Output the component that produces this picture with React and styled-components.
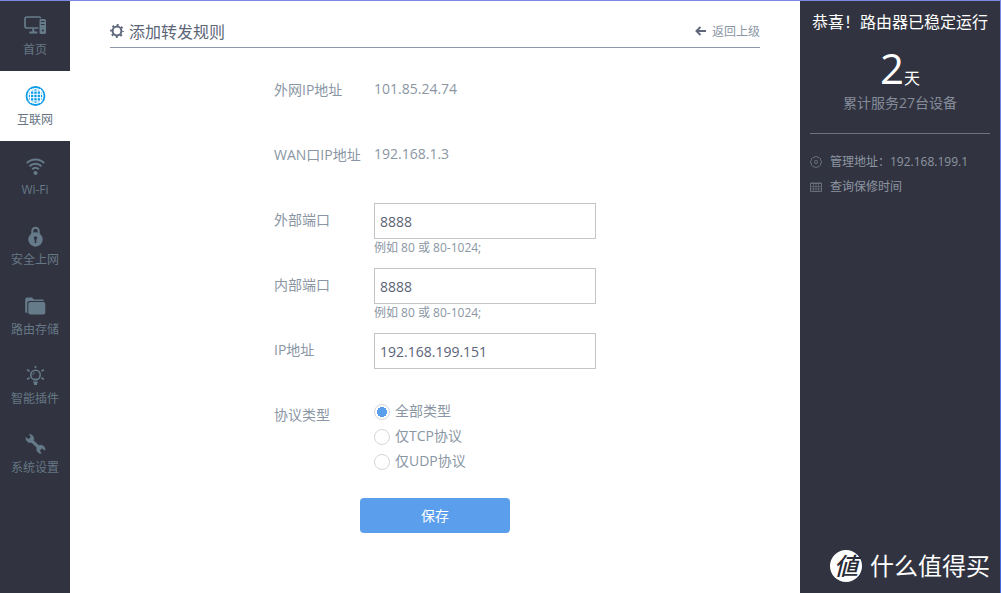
import React, { useState } from 'react'
import styled, { createGlobalStyle } from 'styled-components'

const GlobalStyle = createGlobalStyle`
  * {
    box-sizing: border-box;
  }
  body {
    margin: 0;
    font-family: "Open Sans", "Noto Sans CJK SC", sans-serif;
    font-size: 14px;
    color: #8a96a3;
    background: #fff;
  }
  a {
    color: inherit;
    text-decoration: none;
  }
  input, button {
    font-family: inherit;
  }
`

const Frame = styled.div`
  min-height: 100vh;
  padding: 1px 1px 0 0;
  display: flex;
  background: linear-gradient(#7b88e4, #4468dc);
`

const Sidebar = styled.nav`
  flex: 0 0 70px;
  display: flex;
  flex-direction: column;
  background: #313440;
`

const NavItem = styled.a`
  height: ${(p) => (p.$short ? 69 : 70)}px;
  padding-top: 13px;
  display: flex;
  flex-direction: column;
  align-items: center;
  font-size: 12px;
  line-height: 24px;
  && {
    color: ${(p) => (p.$active ? '#667482' : '#667785')};
  }
  background: ${(p) => (p.$active ? '#fff' : 'transparent')};
  svg {
    flex: none;
    color: ${(p) => (p.$active ? '#0d9bea' : '#667b89')};
  }
`

const Main = styled.main`
  flex: 1;
  min-width: 0;
  padding: 0 40px;
  background: #fff;
`

const Header = styled.header`
  height: 47px;
  padding-top: 14px;
  display: flex;
  justify-content: space-between;
  align-items: center;
  border-bottom: 1px solid #8f97aa;
`

const Title = styled.h1`
  margin: 0;
  display: flex;
  align-items: center;
  gap: 5px;
  font-size: 16px;
  font-weight: 400;
  color: #5c6678;
`

const BackLink = styled.a`
  display: flex;
  align-items: center;
  gap: 6px;
  font-size: 12px;
  svg {
    color: #5c6678;
  }
`

const Form = styled.form`
  max-width: 322px;
  margin: 25px auto;
`

const Row = styled.div`
  min-height: 65px;
  display: grid;
  grid-template-columns: 100px 1fr;
  align-items: start;
`

const Label = styled.label`
  line-height: 34px;
  white-space: nowrap;
`

const Value = styled.output`
  line-height: 32px;
`

const TextInput = styled.input`
  display: block;
  width: 100%;
  height: 36px;
  padding: 0 5px;
  border: 1px solid #c4c4c4;
  border-radius: 0;
  background: #fff;
  color: #5a6377;
  font-size: 14px;
  outline: none;
`

const Hint = styled.div`
  font-size: 12px;
  line-height: 18px;
`

const RadioList = styled.div`
  display: flex;
  flex-direction: column;
`

const RadioLabel = styled.label`
  height: 25px;
  display: flex;
  align-items: flex-start;
  gap: 5px;
  line-height: 25px;
`

const Radio = styled.input`
  appearance: none;
  width: 16px;
  height: 16px;
  margin: 6px 0 0;
  border: 1px solid #d4d6d9;
  border-radius: 50%;
  background: #fff;
  &:checked {
    background: radial-gradient(circle, #5a9eec 5px, #fff 5px);
  }
`

const SaveButton = styled.button`
  display: block;
  width: 150px;
  height: 35px;
  margin: 25px auto 0;
  padding: 0 0 2px;
  border: 0;
  border-radius: 4px;
  background: #5a9eec;
  color: #fff;
  font-size: 14px;
`

const Aside = styled.aside`
  flex: 0 0 200px;
  padding: 9px 10px 11px;
  display: flex;
  flex-direction: column;
  background: #313440;
`

const Status = styled.section`
  padding-bottom: 18px;
  border-bottom: 1px solid #6d717c;
  text-align: center;
`

const StatusTitle = styled.h2`
  margin: 0;
  font-size: 16px;
  font-weight: 400;
  line-height: 24px;
  color: #fff;
  white-space: nowrap;
`

const Days = styled.div`
  height: 57px;
  line-height: 68px;
  font-size: 16px;
  color: #fff;
  strong {
    font-size: 42px;
    font-weight: 400;
  }
`

const Served = styled.div`
  line-height: 24px;
  color: #858b9a;
`

const InfoList = styled.ul`
  margin: 15px 0 0;
  padding: 0;
  list-style: none;
  font-size: 12px;
  line-height: 25px;
  color: #8d95a0;
  li, a {
    display: flex;
    align-items: center;
    gap: 8px;
    white-space: nowrap;
  }
  svg {
    flex: none;
    color: #686d79;
  }
`

const Brand = styled.div`
  margin-top: auto;
  display: flex;
  align-items: center;
  justify-content: flex-end;
  gap: 8px;
  font-family: "Noto Sans CJK SC", sans-serif;
  font-size: 24px;
  line-height: 30px;
  color: #fff;
  white-space: nowrap;
`

const BrandBadge = styled.span`
  width: 32px;
  height: 32px;
  border-radius: 50%;
  background: #fff;
  color: #292c36;
  font-style: italic;
  font-weight: 500;
  text-align: center;
`

const BrandName = styled.span`
  height: 32px;
`

const NavIcon = ({ children }) => (
  <svg width="24" height="24" viewBox="0 0 24 24" fill="none" stroke="currentColor" aria-hidden="true">
    {children}
  </svg>
)

const HomeIcon = () => (
  <NavIcon>
    <path d="M15.5 14H4a2 2 0 0 1-2-2V5a2 2 0 0 1 2-2h12a2 2 0 0 1 1.8 1.2" strokeWidth="1.7" />
    <path d="M10.3 14.5v3M6.3 18.5h8" strokeWidth="2" />
    <rect x="16.5" y="5" width="6.5" height="15" rx="1.5" fill="currentColor" stroke="none" />
    <path d="M18 7.5h3.5M18 10.5h3.5" stroke="#313440" strokeWidth="1.2" />
    <circle cx="19.8" cy="16.5" r="1.1" fill="#313440" stroke="none" />
  </NavIcon>
)

const GlobeIcon = () => (
  <NavIcon>
    <circle cx="12.5" cy="12" r="9" strokeWidth="1.8" />
    <circle cx="12.5" cy="12" r="6.8" fill="currentColor" stroke="none" />
    <path d="M7.5 5v14M10.8 5v14M14.2 5v14M17.5 5v14" stroke="#fff" />
    <path d="M5.5 7h14M5.5 10.3h14M5.5 13.7h14M5.5 17h14" stroke="#fff" />
  </NavIcon>
)

const WifiIcon = () => (
  <NavIcon>
    <g strokeWidth="2">
      <path d="M3.8 9a12.5 12.5 0 0 1 17.4 0" />
      <path d="M6.6 12.2a8.5 8.5 0 0 1 11.8 0" />
      <path d="M9.2 15.2a5 5 0 0 1 6.6 0" />
    </g>
    <circle cx="12.5" cy="19" r="2" fill="currentColor" stroke="none" />
  </NavIcon>
)

const LockIcon = () => (
  <NavIcon>
    <path d="M9.3 10V7a3.2 3.2 0 0 1 6.4 0v3" strokeWidth="2" />
    <circle cx="12.5" cy="15.5" r="7.2" fill="currentColor" stroke="none" />
    <circle cx="12.5" cy="14" r="1.8" fill="#313440" stroke="none" />
    <path d="M12.5 14v5" stroke="#313440" strokeWidth="1.6" />
  </NavIcon>
)

const FolderIcon = () => (
  <NavIcon>
    <path d="M2.2 18V5.5a2 2 0 0 1 2-2H9l2 2h8a2 2 0 0 1 2 1.4H6.5a2.2 2.2 0 0 0-2.2 2.2V19a2.4 2.4 0 0 1-2.1-1z" fill="currentColor" stroke="none" />
    <rect x="5.3" y="8" width="17" height="12.5" rx="2" fill="currentColor" stroke="none" />
  </NavIcon>
)

const BulbIcon = () => (
  <NavIcon>
    <circle cx="12.5" cy="12" r="4.7" strokeWidth="1.6" />
    <path d="M10 11.8a2.5 2.5 0 0 1 1.8-2.2" />
    <path d="M10.8 16.5h3.4" strokeWidth="1.6" />
    <path d="M10.3 19.3h4.4M11 21.2h3" strokeWidth="1.8" />
    <path d="M12.5 3v2M4 6.6l2.6 1.6M21 6.6l-2.6 1.6M4 16.4l2.6-1.6M21 16.4l-2.6-1.6" strokeWidth="1.7" />
  </NavIcon>
)

const WrenchIcon = () => (
  <NavIcon>
    <path
      d="M6.4 2.2a4.6 4.6 0 0 1 4.2 6.2l5.3 5a4.6 4.6 0 0 1 6.2 4.9l-3.2-2-2.2 2.2 1.6 3.1a4.6 4.6 0 0 1-4.5-6l-5.3-5a4.6 4.6 0 0 1-5.6-5.2l2.8 1.8 2.2-2z"
      fill="currentColor"
      strokeWidth=".4"
      strokeLinejoin="round"
    />
  </NavIcon>
)

const GearIcon = () => (
  <svg width="14" height="14" viewBox="0 0 14 14" fill="none" stroke="currentColor" aria-hidden="true">
    <circle cx="7" cy="7" r="4.4" strokeWidth="2" />
    <circle cx="7" cy="7" r="6" strokeWidth="1.8" strokeDasharray="2 2.71" strokeDashoffset="1" />
  </svg>
)

const ArrowIcon = () => (
  <svg width="11" height="10" viewBox="0 0 11 10" fill="none" stroke="currentColor" strokeWidth="1.8" aria-hidden="true">
    <path d="M11 5H2M5.5 1 1.4 5l4.1 4" />
  </svg>
)

const CogIcon = () => (
  <svg width="12" height="12" viewBox="0 0 12 12" fill="none" stroke="currentColor" aria-hidden="true">
    <path d="M4.7.6h2.6l.5 1.1 1.3-.3 1.5 1.5-.3 1.3 1.1.5v2.6l-1.1.5.3 1.3-1.5 1.5-1.3-.3-.5 1.1H4.7l-.5-1.1-1.3.3-1.5-1.5.3-1.3-1.1-.5V4.7l1.1-.5-.3-1.3 1.5-1.5 1.3.3z" />
    <circle cx="6" cy="6" r="1.6" />
  </svg>
)

const CalendarIcon = () => (
  <svg width="12" height="10" viewBox="0 0 12 10" fill="none" stroke="currentColor" aria-hidden="true">
    <path d="M.5 1h11v8.5H.5zM0 1.5h12" />
    <path d="M1 4.5h10M1 7h10M3.5 2v7M6 2v7M8.5 2v7" strokeWidth=".7" />
  </svg>
)

const menu = [
  { name: '首页', icon: HomeIcon },
  { name: '互联网', icon: GlobeIcon, active: true },
  { name: 'Wi-Fi', icon: WifiIcon },
  { name: '安全上网', icon: LockIcon },
  { name: '路由存储', icon: FolderIcon, short: true },
  { name: '智能插件', icon: BulbIcon, short: true },
  { name: '系统设置', icon: WrenchIcon, short: true },
]

const protocols = [
  { value: 'all', text: '全部类型' },
  { value: 'tcp', text: '仅TCP协议' },
  { value: 'udp', text: '仅UDP协议' },
]

function RuleForm() {
  const [protocol, setProtocol] = useState('all')

  return (
    <Form onSubmit={(e) => e.preventDefault()}>
      <Row>
        <Label htmlFor="outerIp">外网IP地址</Label>
        <Value id="outerIp">101.85.24.74</Value>
      </Row>
      <Row>
        <Label htmlFor="wanIp">WAN口IP地址</Label>
        <Value id="wanIp">192.168.1.3</Value>
      </Row>
      <Row>
        <Label htmlFor="outerPort">外部端口</Label>
        <div>
          <TextInput id="outerPort" type="text" defaultValue="8888" />
          <Hint>例如 80 或 80-1024;</Hint>
        </div>
      </Row>
      <Row>
        <Label htmlFor="innerPort">内部端口</Label>
        <div>
          <TextInput id="innerPort" type="text" defaultValue="8888" />
          <Hint>例如 80 或 80-1024;</Hint>
        </div>
      </Row>
      <Row>
        <Label htmlFor="ip">IP地址</Label>
        <TextInput id="ip" type="text" defaultValue="192.168.199.151" />
      </Row>
      <Row>
        <Label as="span" id="protocol">协议类型</Label>
        <RadioList role="radiogroup" aria-labelledby="protocol">
          {protocols.map((p) => (
            <RadioLabel key={p.value}>
              <Radio
                type="radio"
                name="protocol"
                checked={protocol === p.value}
                onChange={() => setProtocol(p.value)}
              />
              {p.text}
            </RadioLabel>
          ))}
        </RadioList>
      </Row>
      <SaveButton type="submit">保存</SaveButton>
    </Form>
  )
}

function App() {
  return (
    <>
      <GlobalStyle />
      <Frame>
        <Sidebar>
          {menu.map(({ name, icon: Icon, active, short }) => (
            <NavItem key={name} href="#" $active={active} $short={short}>
              <Icon />
              {name}
            </NavItem>
          ))}
        </Sidebar>
        <Main>
          <Header>
            <Title><GearIcon />添加转发规则</Title>
            <BackLink href="#"><ArrowIcon />返回上级</BackLink>
          </Header>
          <RuleForm />
        </Main>
        <Aside>
          <Status>
            <StatusTitle>恭喜！路由器已稳定运行</StatusTitle>
            <Days><strong>2</strong>天</Days>
            <Served>累计服务27台设备</Served>
          </Status>
          <InfoList>
            <li><CogIcon />管理地址：192.168.199.1</li>
            <li><a href="#"><CalendarIcon />查询保修时间</a></li>
          </InfoList>
          <Brand>
            <BrandBadge>値</BrandBadge>
            <BrandName>什么值得买</BrandName>
          </Brand>
        </Aside>
      </Frame>
    </>
  )
}

export default App
